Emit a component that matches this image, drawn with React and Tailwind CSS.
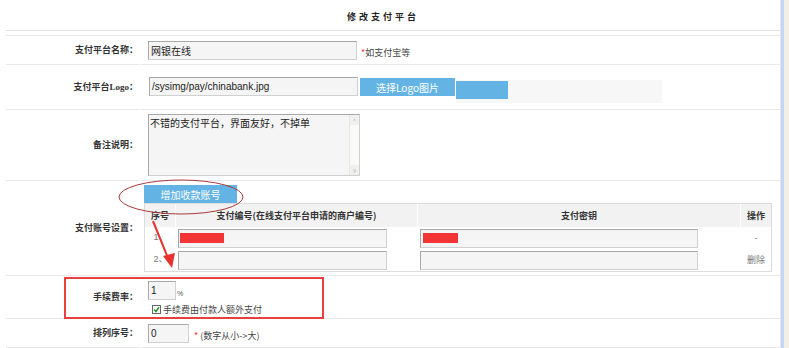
import React from 'react';

const cjk = { fontFamily: '"Noto Sans CJK SC", "Liberation Sans", sans-serif' };
const latin = { fontFamily: '"Liberation Sans", "Noto Sans CJK SC", sans-serif' };

const Row = ({ label, h, children, className = '' }) => (
  <div className={`flex gap-px ${h}`}>
    <div className="w-[134px] shrink-0 border-b border-[#e8e8e8] flex items-center justify-end pr-[2px] text-[9px] font-bold text-[#333]">
      {label}
    </div>
    <div className={`flex-1 border-b border-[#e8e8e8] flex ${className}`}>{children}</div>
  </div>
);

const Input = ({ w, value, className = '', children }) => (
  <div
    className={`relative h-[19px] ${w} border border-[#a8a8a8] border-b-[#d0d0d0] border-r-[#d0d0d0] bg-[#f5f5f5] flex items-center pl-[2px] text-[10px] text-[#222] ${className}`}
    style={latin}
  >
    {value}
    {children}
  </div>
);

const BlueButton = ({ w, h = 'h-[18px]', children }) => (
  <div className={`${w} ${h} bg-[#63b4e4] flex items-center justify-center text-white text-[10px]`}>
    {children}
  </div>
);

export default function App() {
  return (
    <div className="relative w-[789px] h-[348px] bg-white flex overflow-hidden text-[#333]" style={cjk}>
      <div className="w-[781px] pl-[6px]">
        <div className="border-r border-[#e6e6e6] h-full">
          {/* title */}
          <div className="h-[31px] border-b border-[#e2e2e2] flex items-center justify-center pr-[20px] pt-[3px]">
            <span className="text-[9px] font-bold tracking-[3px] text-[#222]">修改支付平台</span>
          </div>
          <div className="mt-[4px] border-t border-[#e8e8e8]">
            <Row label="支付平台名称：" h="h-[29px]" className="items-center pl-[7px]">
              <Input w="w-[209px]" value={<span style={cjk}>网银在线</span>} />
              <span className="ml-[4px] mt-[5px] text-[9px] text-[#444]">
                <span className="text-[#e33]">*</span>如支付宝等
              </span>
            </Row>

            <Row label={<span>支付平台<span className="font-serif" style={{ fontFamily: '"Liberation Serif", serif' }}>Logo</span>：</span>} h="h-[45px]" className="items-center pl-[8px] pb-[2px]">
              <Input w="w-[209px]" value="/sysimg/pay/chinabank.jpg" />
              <div className="ml-[2px] self-start mt-[13px]">
                <BlueButton w="w-[95px]">选择Logo图片</BlueButton>
              </div>
              <div className="self-start mt-[15px] ml-px w-[206px] h-[23px] bg-[#f7f7f7]">
                <div className="mt-px w-[52px] h-[18px] bg-[#63b4e4]" />
              </div>
            </Row>

            <Row label="备注说明：" h="h-[71px]" className="items-center pl-[7px]">
              <div className="w-[212px] h-[62px] border border-[#a8a8a8] border-b-[#d0d0d0] border-r-[#d0d0d0] bg-[#f5f5f5] flex">
                <div className="flex-1 pl-[1px] pt-[1px] text-[10px] text-[#222] leading-[14px]">不错的支付平台，界面友好，不掉单</div>
                <div className="w-[10px] bg-[#fafaf7] border-l border-[#e6e6e6] flex flex-col justify-between text-[#bbb]">
                  <div className="h-[10px] flex items-center justify-center text-[6px] bg-[#f0f0ec]">^</div>
                  <div className="h-[10px] flex items-center justify-center text-[6px] bg-[#f0f0ec]">v</div>
                </div>
              </div>
            </Row>

            <Row label="支付账号设置：" h="h-[95px]" className="flex-col pl-[3px] pt-[4px]">
              <BlueButton w="w-[93px]">增加收款账号</BlueButton>
              <div className="w-[628px] border border-[#dcdcdc] text-[9px]">
                <div className="flex h-[23px] bg-[#f2f2f2] font-bold text-[#333]">
                  <div className="w-[31px] flex items-center justify-center border-r border-white">序号</div>
                  <div className="w-[242px] flex items-center justify-center border-r border-white">支付编号(在线支付平台申请的商户编号)</div>
                  <div className="w-[323px] flex items-center justify-center border-r border-white">支付密钥</div>
                  <div className="flex-1 flex items-center justify-center">操作</div>
                </div>
                {[1, 2].map((n) => (
                  <div key={n} className="flex h-[22px] items-center text-[#777]">
                    <div className="w-[31px] text-center" style={latin}>{n}、</div>
                    <div className="w-[242px] pl-[2px]">
                      <Input w="w-[209px]" className="h-[19px]">
                        {n === 1 && <div className="absolute left-[1px] top-[3px] w-[44px] h-[10px] bg-[#f33535]" />}
                      </Input>
                    </div>
                    <div className="w-[323px] pl-[2px]">
                      <Input w="w-[278px]" className="h-[19px]">
                        {n === 1 && <div className="absolute left-[2px] top-[3px] w-[35px] h-[10px] bg-[#f33535]" />}
                      </Input>
                    </div>
                    <div className="flex-1 text-center">{n === 1 ? '-' : '删除'}</div>
                  </div>
                ))}
              </div>
            </Row>

            <Row label="手续费率：" h="h-[43px]" className="flex-col pl-[7px] pt-[5px]">
              <div className="flex items-end">
                <Input w="w-[28px]" value="1" className="h-[18px]" />
                <span className="ml-[1px] text-[7px] text-[#555] mb-[1px]" style={latin}>%</span>
              </div>
              <div className="flex items-center mt-[3px] ml-[4px]">
                <div className="w-[9px] h-[9px] border border-[#666] bg-white flex items-center justify-center">
                  <svg width="7" height="7" viewBox="0 0 7 7">
                    <path d="M1 3.5 L3 5.5 L6 1.2" stroke="#2a9a2a" strokeWidth="1.5" fill="none" />
                  </svg>
                </div>
                <span className="ml-[2px] text-[9px] text-[#444]">手续费由付款人额外支付</span>
              </div>
            </Row>

            <Row label="排列序号：" h="h-[29px]" className="items-center pl-[7px]">
              <Input w="w-[41px]" value="0" className="h-[18px]" />
              <span className="ml-[5px] mt-[5px] text-[9px] text-[#444]">
                <span className="text-[#e33]">*</span> (数字从小-&gt;大)
              </span>
            </Row>
          </div>
        </div>
      </div>

      {/* window scrollbar edge */}
      <div className="w-[8px] flex">
        <div className="w-[3px] bg-[#c5d5f7]" />
        <div className="flex-1 bg-[#f3eee6]" />
      </div>

      {/* annotations */}
      <svg className="absolute left-0 top-0 pointer-events-none" width="789" height="348">
        <ellipse cx="181" cy="197" rx="62" ry="17" fill="none" stroke="#a83a3a" strokeWidth="1" />
        <line x1="153" y1="221" x2="168" y2="258" stroke="#e8322f" strokeWidth="2" />
        <polygon points="172,268 163,256 175,253" fill="#e8322f" />
        <rect x="65" y="278" width="258" height="40" fill="none" stroke="#e8403d" strokeWidth="2" />
      </svg>
    </div>
  );
}
